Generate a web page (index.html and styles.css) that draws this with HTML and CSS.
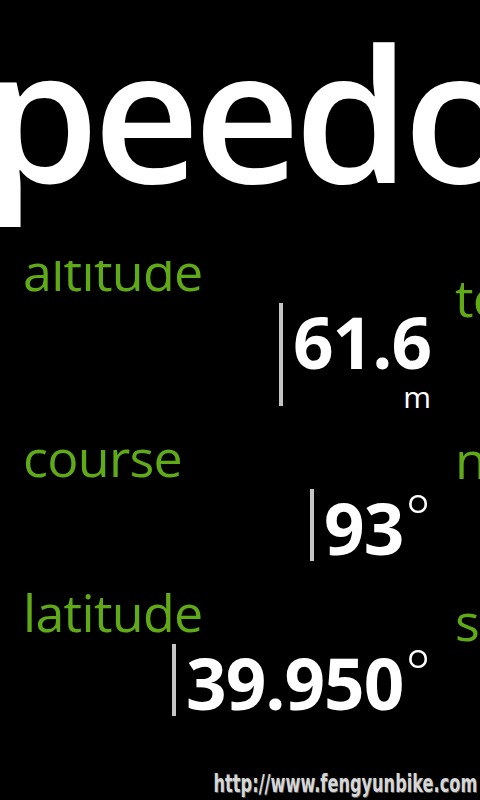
FILE: index.html
```html
<!DOCTYPE html>
<html lang="en">
<head>
  <meta charset="UTF-8">
  <meta name="viewport" content="width=device-width, initial-scale=1.0">
  <title>Speedometer</title>
  <link rel="stylesheet" href="styles.css">
</head>
<body>
  <div class="panorama">
    <h1 class="panorama-title">speedometer</h1>

    <div class="panorama-items">
      <section class="item item-scrolled">
        <div class="label">altitude</div>
        <div class="value">
          <div class="value-box">
            <div class="num-line"><span class="num">61.6</span></div>
            <div class="unit">m</div>
          </div>
        </div>

        <div class="label">course</div>
        <div class="value">
          <div class="value-box">
            <div class="num-line"><span class="num">93</span><span class="deg">°</span></div>
          </div>
        </div>

        <div class="label">latitude</div>
        <div class="value">
          <div class="value-box">
            <div class="num-line"><span class="num">39.950</span><span class="deg">°</span></div>
          </div>
        </div>
      </section>

      <section class="item item-second">
        <div class="label">temperature</div>
        <div class="value short">
          <div class="value-box">
            <div class="num-line"><span class="num">18</span><span class="deg">°</span></div>
          </div>
        </div>

        <div class="label">north</div>
        <div class="value short">
          <div class="value-box">
            <div class="num-line"><span class="num">0</span></div>
          </div>
        </div>

        <div class="label">satellites</div>
        <div class="value short">
          <div class="value-box">
            <div class="num-line"><span class="num">7</span></div>
          </div>
        </div>
      </section>
    </div>
  </div>

  <div class="watermark">http://www.fengyunbike.com</div>
</body>
</html>
```

FILE: styles.css
```css
body {
  margin: 0;
  width: 480px;
  height: 800px;
  overflow: hidden;
  background: #000;
  color: #fff;
  font-family: "Open Sans", "Noto Sans", sans-serif;
  position: relative;
}
.panorama-title {
  margin: 0 0 0 -100px;
  height: 261px;
  font-size: 185px;
  line-height: 222px;
  font-weight: 600;
  letter-spacing: -6px;
  white-space: nowrap;
}
.panorama-items {
  display: flex;
  height: 539px;
  overflow: hidden;
  padding-left: 23px;
}
.item {
  flex: 0 0 420px;
  margin-right: 12px;
}
.item-scrolled {
  margin-top: -20px;
}
.item-second {
  margin-top: 6px;
}
.label {
  color: #60a917;
  font-size: 52px;
  line-height: 60px;
  letter-spacing: -0.7px;
  white-space: nowrap;
}
.value {
  display: flex;
  justify-content: flex-end;
  margin: 2px 12px 21px 0;
}
.value.short {
  margin-bottom: 28px;
}
.value-box {
  border-left: 4px solid #c4c4c4;
  padding-left: 10px;
}
.num-line {
  display: flex;
  height: 72px;
  line-height: 78px;
}
.num {
  font-size: 71px;
  font-weight: 700;
  letter-spacing: -1px;
}
.deg {
  font-size: 60px;
  font-weight: 300;
  line-height: 60px;
  margin-top: -3px;
  margin-left: 2px;
}
.unit {
  height: 31px;
  font-size: 30px;
  line-height: 44px;
  text-align: right;
}
.watermark {
  position: absolute;
  right: 3px;
  bottom: 3px;
  font-family: "DejaVu Sans Condensed", "DejaVu Sans", sans-serif;
  font-stretch: condensed;
  font-weight: bold;
  font-size: 25px;
  line-height: 26px;
  color: #d6d6d6;
  text-shadow: 1px 1px 0 #555;
  white-space: nowrap;
  transform: scaleX(0.72);
  transform-origin: right bottom;
}
```
